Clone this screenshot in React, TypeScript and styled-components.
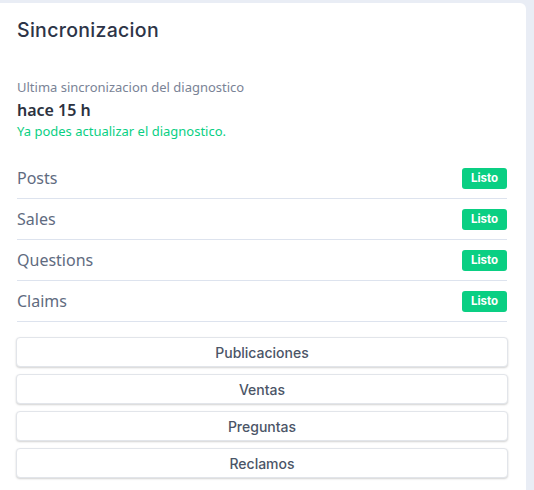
import React from 'react';
import styled, {createGlobalStyle} from 'styled-components';

const GlobalStyle = createGlobalStyle`
  html, body {
    margin: 0;
    padding: 0;
    background: #e9edf5;
  }
  body {
    font-family: "Noto Sans", "Open Sans", sans-serif;
  }
`;

const Page = styled.div`
  width: 534px;
  height: 490px;
  overflow: hidden;
  padding-top: 3px;
  box-sizing: border-box;
`;

const Card = styled.div`
  width: 526px;
  min-height: 500px;
  background: #ffffff;
  border-top-right-radius: 6px;
  padding: 15px 19px 0 17px;
  box-sizing: border-box;
`;

const Title = styled.h2`
  margin: 0;
  font-family: "Inter", sans-serif;
  font-weight: 500;
  font-size: 19.5px;
  line-height: 24px;
  color: #2d3447;
  letter-spacing: 0.3px;
`;

const SyncInfo = styled.div`
  margin-top: 35px;
  display: flex;
  flex-direction: column;
`;

const SyncLabel = styled.span`
  font-size: 13px;
  line-height: 20px;
  color: #7a8396;
`;

const SyncTime = styled.span`
  margin-top: 1px;
  font-size: 16px;
  font-weight: 600;
  line-height: 24px;
  color: #2c3240;
`;

const SyncHint = styled.span`
  font-size: 13px;
  line-height: 18px;
  color: #0acf83;
`;

const StatusList = styled.ul`
  list-style: none;
  margin: 18px 0 0;
  padding: 0;
`;

const StatusRow = styled.li`
  display: flex;
  align-items: center;
  justify-content: space-between;
  height: 40px;
  border-bottom: 1px solid #dde3ee;
`;

const StatusName = styled.span`
  font-size: 16px;
  color: #5f6b80;
`;

const Badge = styled.span`
  display: inline-flex;
  align-items: center;
  justify-content: center;
  width: 45px;
  height: 21px;
  border-radius: 3px;
  background: #0acf83;
  color: #ffffff;
  font-family: "Inter", sans-serif;
  font-weight: 700;
  font-size: 11.5px;
`;

const Actions = styled.div`
  margin: 15px 0 0 -1px;
  display: grid;
  grid-row-gap: 7px;
`;

const ActionButton = styled.button`
  height: 30px;
  width: calc(100% + 1px);
  background: #ffffff;
  border: 1px solid #e2e5ea;
  border-radius: 4px;
  box-shadow: 0 1px 2px rgba(0, 0, 0, 0.18);
  font-family: "Inter", sans-serif;
  font-weight: 500;
  font-size: 14px;
  color: #4b5567;
  cursor: pointer;
`;

const statuses = ['Posts', 'Sales', 'Questions', 'Claims'];
const actions = ['Publicaciones', 'Ventas', 'Preguntas', 'Reclamos'];

export default function App() {
  return (
    <Page>
      <GlobalStyle />
      <Card>
        <Title>Sincronizacion</Title>
        <SyncInfo>
          <SyncLabel>Ultima sincronizacion del diagnostico</SyncLabel>
          <SyncTime>hace 15 h</SyncTime>
          <SyncHint>Ya podes actualizar el diagnostico.</SyncHint>
        </SyncInfo>
        <StatusList>
          {statuses.map((s) => (
            <StatusRow key={s}>
              <StatusName>{s}</StatusName>
              <Badge>Listo</Badge>
            </StatusRow>
          ))}
        </StatusList>
        <Actions>
          {actions.map((a) => (
            <ActionButton key={a}>{a}</ActionButton>
          ))}
        </Actions>
      </Card>
    </Page>
  );
}
